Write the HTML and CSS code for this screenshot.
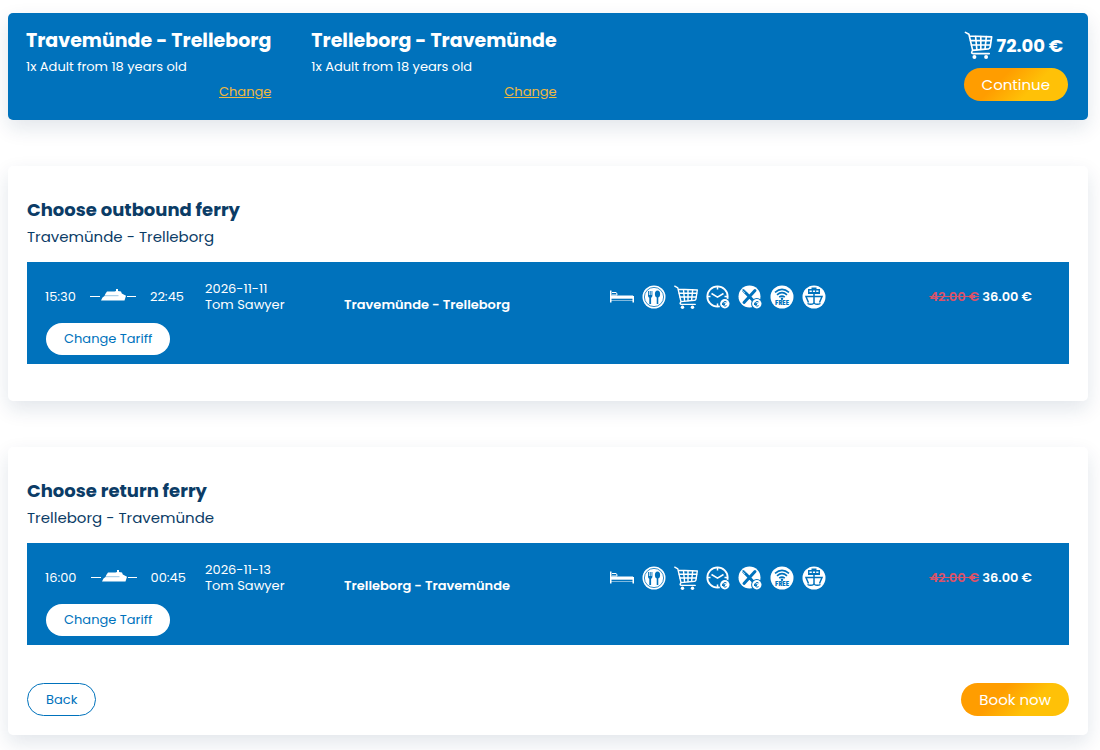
FILE: index.html
```html
<!DOCTYPE html>
<html lang="en">
<head>
    <meta charset="UTF-8">
    <meta name="viewport" content="width=device-width, initial-scale=1.0">
    <title>Choose ferry</title>
    <link rel="stylesheet" href="styles.css">
</head>
<body>
    <!-- Icons used several times on the page -->
    <svg class="sprite" aria-hidden="true">
        <symbol id="ship" viewBox="0 0 48 16">
            <path d="M1 7.500h10M38 7.500h9" stroke="currentColor" stroke-width="1"/>
            <path fill="currentColor" d="M12 11.500l1.500-3 2-1.500.8-2 1.700-2.500h7.500l1.500-.5V0H29v2l3 .5.800 2 4.200 2.200-1.500 4.800z"/>
            <path d="M15.500 6.700h14" stroke="#0072bc" stroke-width=".4"/>
        </symbol>
        <symbol id="cart" viewBox="0 0 24 24">
            <g fill="none" stroke="currentColor" stroke-width="1.400" stroke-linecap="round" stroke-linejoin="round">
                <path d="M.8 1.200l3 1.600L7 16.600q-2 2.800.6 2.800h13.600M6.800 16.600l13.700-1.300q1.200-.2 1.500-1.500L23.300 5 4.300 4.300"/>
                <path d="M5.200 8.200h17.500M6 12h16M9.500 4.800l1.100 11.200M14 4.800v11M18.700 4.800l-1.100 10.500"/>
            </g>
            <circle cx="8.500" cy="22.200" r="1.700" fill="currentColor"/>
            <circle cx="18.500" cy="22.200" r="1.700" fill="currentColor"/>
        </symbol>
        <symbol id="bed" viewBox="0 0 24 24">
            <path fill="currentColor" d="M0 5.500h1.500v10h21V11H24v6.500h-1.500V16h-21v1.500H0z"/>
            <path fill="none" stroke="currentColor" stroke-width="1" d="M2 7.500h4q1 0 1 2.500H2"/>
            <path fill="currentColor" d="M1 10.500h22v3.200H1z"/>
        </symbol>
        <symbol id="restaurant" viewBox="0 0 24 24">
            <circle cx="12" cy="12" r="11.500" fill="currentColor"/>
            <circle cx="12" cy="12" r="9.600" fill="none" stroke="#0072bc" stroke-width=".8"/>
            <path fill="#0072bc" d="M6 6h.9v4h.8V6h1v4h.8V6h.9v4.500q0 1.700-1.300 2.200V19H7.300v-6.300Q6 12.200 6 10.500z"/>
            <ellipse cx="15.500" cy="9" rx="2.600" ry="3.500" fill="#0072bc"/>
            <path fill="#0072bc" d="M14.700 11h1.600v8h-1.600z"/>
        </symbol>
        <symbol id="euro" viewBox="0 0 24 24">
            <circle cx="18.800" cy="18.800" r="5.700" fill="#0072bc"/>
            <circle cx="18.800" cy="18.800" r="4.700" fill="currentColor"/>
            <path fill="none" stroke="#0072bc" stroke-width="1" d="M20.600 17a2.300 2.300 0 1 0 0 3.600M16 18.300h3.500M16 19.500h3"/>
        </symbol>
        <symbol id="clock" viewBox="0 0 24 24">
            <circle cx="11.500" cy="11.500" r="10.200" fill="none" stroke="currentColor" stroke-width="1.800"/>
            <path fill="none" stroke="currentColor" stroke-width="1.500" d="M5.500 8.500l6 3.700 6-3.700M11.500 2v2.500M11.500 18.500V21M2 11.500h2.500M18.500 11.500H21"/>
            <use href="#euro"/>
        </symbol>
        <symbol id="cutlery" viewBox="0 0 24 24">
            <circle cx="11.500" cy="11.500" r="11" fill="currentColor"/>
            <path fill="none" stroke="#0072bc" stroke-width="3" stroke-linecap="round" d="M5.500 5.500L17 17.500M17 5.500L6 17.500"/>
            <path stroke="currentColor" stroke-width=".6" d="M4 5l3 3M5.500 3.800l3 3"/>
            <use href="#euro"/>
        </symbol>
        <symbol id="wifi" viewBox="0 0 24 24">
            <circle cx="12" cy="12" r="11.500" fill="currentColor"/>
            <g fill="none" stroke="#0072bc" stroke-width="1.600">
                <path d="M5 7.300q7-6 14 0M7 9.800q5-4.200 10 0M9.200 12.200q2.800-2.200 5.600 0"/>
            </g>
            <circle cx="12" cy="13.800" r="1.200" fill="#0072bc"/>
            <text class="wifi-text" x="12" y="19.500" text-anchor="middle">FREE</text>
        </symbol>
        <symbol id="port" viewBox="0 0 24 24">
            <circle cx="12" cy="12" r="11.500" fill="currentColor"/>
            <path fill="#0072bc" d="M9.500 2.500h5v1.500h3.500v5H6V4h3.500z"/>
            <path fill="currentColor" d="M7.500 5.500h2.300V7H7.500zM10.900 5.500h2.200V7h-2.200zM14.200 5.500h2.300V7h-2.300z"/>
            <path fill="none" stroke="#0072bc" stroke-width="1.500" d="M6.500 17.500L4 11.500h16l-2.500 6M12 9v9"/>
            <path fill="none" stroke="#0072bc" stroke-width="1.400" d="M5.500 18.500q3.500 1.800 6.500-.3 3 2.100 6.500.3"/>
        </symbol>
    </svg>

    <header class="summary">
        <div class="trip">
            <h2>Travemünde - Trelleborg</h2>
            <p>1x Adult from 18 years old</p>
            <a href="#outbound">Change</a>
        </div>
        <div class="trip">
            <h2>Trelleborg - Travemünde</h2>
            <p>1x Adult from 18 years old</p>
            <a href="#return">Change</a>
        </div>
        <div class="total">
            <div class="total-price">
                <svg class="total-cart" aria-hidden="true"><use href="#cart"/></svg>
                <span>72.00 €</span>
            </div>
            <button type="button" class="btn btn-primary">Continue</button>
        </div>
    </header>

    <main>
        <section class="card" id="outbound">
            <h2>Choose outbound ferry</h2>
            <p class="route">Travemünde - Trelleborg</p>

            <div class="ferry">
                <div class="ferry-row">
                    <div class="times">
                        <span>15:30</span>
                        <svg class="ship" aria-hidden="true"><use href="#ship"/></svg>
                        <span>22:45</span>
                    </div>
                    <div class="vessel">2026-11-11<br>Tom Sawyer</div>
                    <div class="ferry-route">Travemünde - Trelleborg</div>
                    <div class="services">
                        <svg><use href="#bed"/></svg>
                        <svg><use href="#restaurant"/></svg>
                        <svg><use href="#cart"/></svg>
                        <svg><use href="#clock"/></svg>
                        <svg><use href="#cutlery"/></svg>
                        <svg><use href="#wifi"/></svg>
                        <svg><use href="#port"/></svg>
                    </div>
                    <div class="price"><del>42.00 €</del> 36.00 €</div>
                </div>
                <button type="button" class="btn btn-tariff">Change Tariff</button>
            </div>
        </section>

        <section class="card" id="return">
            <h2>Choose return ferry</h2>
            <p class="route">Trelleborg - Travemünde</p>

            <div class="ferry">
                <div class="ferry-row">
                    <div class="times">
                        <span>16:00</span>
                        <svg class="ship" aria-hidden="true"><use href="#ship"/></svg>
                        <span>00:45</span>
                    </div>
                    <div class="vessel">2026-11-13<br>Tom Sawyer</div>
                    <div class="ferry-route">Trelleborg - Travemünde</div>
                    <div class="services">
                        <svg><use href="#bed"/></svg>
                        <svg><use href="#restaurant"/></svg>
                        <svg><use href="#cart"/></svg>
                        <svg><use href="#clock"/></svg>
                        <svg><use href="#cutlery"/></svg>
                        <svg><use href="#wifi"/></svg>
                        <svg><use href="#port"/></svg>
                    </div>
                    <div class="price"><del>42.00 €</del> 36.00 €</div>
                </div>
                <button type="button" class="btn btn-tariff">Change Tariff</button>
            </div>

            <div class="actions">
                <button type="button" class="btn btn-outline">Back</button>
                <button type="button" class="btn btn-primary">Book now</button>
            </div>
        </section>
    </main>
</body>
</html>
```
FILE: styles.css
```css
* {
    box-sizing: border-box;
}
body {
    margin: 0;
    padding: 13px 12px 15px 8px;
    font-family: Poppins, Inter, sans-serif;
    font-size: 13px;
    color: #0b3c66;
    background-color: #fff;
}
h2, p {
    margin: 0;
}
.sprite {
    display: none;
}

/* Blue bar with the selected trips */
.summary {
    display: flex;
    gap: 40px;
    padding: 14px 20px 16px 18px;
    border-radius: 5px;
    background-color: #0072bc;
    color: #fff;
    box-shadow: 0 8px 20px rgba(20, 50, 90, 0.12);
}
.trip {
    display: flex;
    flex-direction: column;
}
.trip h2 {
    font-size: 19px;
    line-height: 28px;
}
.trip p {
    line-height: 24px;
}
.trip a {
    align-self: flex-end;
    line-height: 25px;
    color: #f0b840;
}
.total {
    margin-left: auto;
    padding-top: 4px;
}
.total-price {
    display: flex;
    align-items: center;
    gap: 4px;
    margin-bottom: 9px;
    font-size: 18px;
    font-weight: 700;
}
.total-cart {
    width: 29px;
    height: 28px;
}

/* Buttons */
.btn {
    height: 33px;
    padding: 0 18px;
    border: 0;
    border-radius: 17px;
    font-family: inherit;
    font-size: 13px;
    cursor: pointer;
}
.btn-primary {
    font-size: 15px;
    color: #fff;
    background: linear-gradient(135deg, #ff9d00 35%, #ffc107 65%);
}
.btn-tariff {
    height: 32px;
    margin: 10px 0 0 1px;
    color: #0072bc;
    background-color: #fff;
}
.btn-outline {
    border: 1px solid #0072bc;
    color: #0072bc;
    background-color: #fff;
}

.card {
    margin-top: 46px;
    padding: 30px 19px 19px;
    border-radius: 5px;
    background-color: #fff;
    box-shadow: 0 8px 20px rgba(20, 50, 90, 0.12);
}
.card h2 {
    font-size: 18px;
    line-height: 28px;
}
.route {
    margin-bottom: 12px;
    font-size: 15px;
    line-height: 26px;
}

/* One departure */
.ferry {
    margin-bottom: 18px;
    padding: 19px 37px 9px 18px;
    background-color: #0072bc;
    color: #fff;
}
.ferry-row {
    display: grid;
    grid-template-columns: 160px 139px 5fr 6fr auto;
    align-items: center;
    line-height: 16px;
}
.times {
    display: flex;
    align-items: center;
    gap: 13px;
}
.ship {
    width: 48px;
    height: 16px;
}
.ferry-route {
    align-self: end;
    font-weight: 600;
}
.services {
    display: flex;
    gap: 8px;
}
.services svg {
    width: 24px;
    height: 24px;
}
.wifi-text {
    font-size: 6px;
    font-weight: 800;
    fill: #0072bc;
}
.price {
    font-weight: 600;
    white-space: nowrap;
}
.price del {
    color: #d9536a;
}
.actions {
    display: flex;
    justify-content: space-between;
    margin-top: 38px;
}
```
